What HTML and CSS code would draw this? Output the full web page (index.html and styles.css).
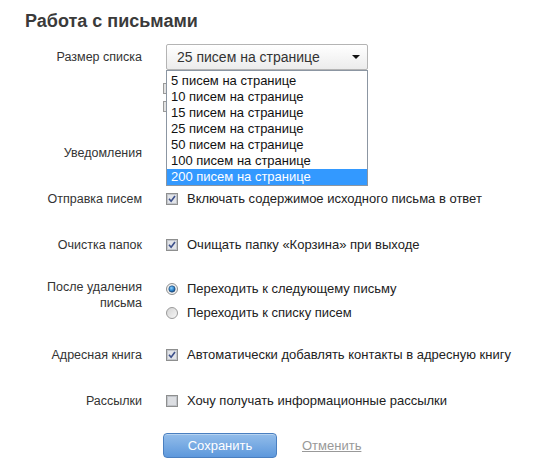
FILE: index.html
```html
<!DOCTYPE html>
<html lang="ru">
<head>
<meta charset="utf-8">
<title>Работа с письмами</title>
<link rel="stylesheet" href="styles.css">
</head>
<body>
<div class="page">
  <h1 class="title">Работа с письмами</h1>
  <div class="form">
    <div class="row row--first">
      <div class="label label--tall">Размер списка</div>
      <div class="content">
        <div class="select-wrap">
          <div class="select">
            <span class="select-value">25 писем на странице</span>
            <span class="select-arrow"></span>
          </div>
          <ul class="dropdown">
            <li class="dropdown-item">5 писем на странице</li>
            <li class="dropdown-item">10 писем на странице</li>
            <li class="dropdown-item">15 писем на странице</li>
            <li class="dropdown-item">25 писем на странице</li>
            <li class="dropdown-item">50 писем на странице</li>
            <li class="dropdown-item">100 писем на странице</li>
            <li class="dropdown-item dropdown-item--active">200 писем на странице</li>
          </ul>
        </div>
        <div class="hidden-opts">
          <div class="hidden-line"><span class="cb--peek"></span></div>
          <div class="hidden-line"><span class="cb--peek"></span></div>
        </div>
      </div>
    </div>

    <div class="row">
      <div class="label">Уведомления</div>
      <div class="content content--blank"></div>
    </div>

    <div class="row">
      <div class="label">Отправка писем</div>
      <div class="content">
        <div class="option">
          <svg class="cb" viewBox="0 0 12 12"><rect x="0.5" y="0.5" width="11" height="11" fill="#fff" stroke="#8e8f8f"/><rect x="1.5" y="1.5" width="9" height="9" fill="#e2e4e8" stroke="#c3c6cc"/><path d="M3 5.8 L5.1 8.3 L9 3" fill="none" stroke="#3b4f8a" stroke-width="1.6"/></svg>
          <span class="option-text">Включать содержимое исходного письма в ответ</span>
        </div>
      </div>
    </div>

    <div class="row">
      <div class="label">Очистка папок</div>
      <div class="content">
        <div class="option">
          <svg class="cb" viewBox="0 0 12 12"><rect x="0.5" y="0.5" width="11" height="11" fill="#fff" stroke="#8e8f8f"/><rect x="1.5" y="1.5" width="9" height="9" fill="#e2e4e8" stroke="#c3c6cc"/><path d="M3 5.8 L5.1 8.3 L9 3" fill="none" stroke="#3b4f8a" stroke-width="1.6"/></svg>
          <span class="option-text">Очищать папку «Корзина» при выходе</span>
        </div>
      </div>
    </div>

    <div class="row row--radio">
      <div class="label label--pad">После удаления<br>письма</div>
      <div class="content">
        <div class="option option--radio">
          <svg class="rb" viewBox="0 0 12 12"><defs><radialGradient id="rdot" cx="0.4" cy="0.35" r="0.7"><stop offset="0" stop-color="#8fd2ff"/><stop offset="0.6" stop-color="#2a7fc6"/><stop offset="1" stop-color="#0d3f78"/></radialGradient></defs><circle cx="6" cy="6" r="5.5" fill="#f1f1f1" stroke="#8e8f8f"/><circle cx="6" cy="6" r="3.2" fill="url(#rdot)" stroke="#24476f" stroke-width="0.6"/></svg>
          <span class="option-text">Переходить к следующему письму</span>
        </div>
        <div class="option option--radio">
          <svg class="rb" viewBox="0 0 12 12"><defs><linearGradient id="rbg" x1="0" y1="0" x2="1" y2="1"><stop offset="0" stop-color="#d2d2d2"/><stop offset="1" stop-color="#f8f8f8"/></linearGradient></defs><circle cx="6" cy="6" r="5.5" fill="url(#rbg)" stroke="#9a9a9a"/></svg>
          <span class="option-text">Переходить к списку писем</span>
        </div>
      </div>
    </div>

    <div class="row row--after-radio">
      <div class="label">Адресная книга</div>
      <div class="content">
        <div class="option">
          <svg class="cb" viewBox="0 0 12 12"><rect x="0.5" y="0.5" width="11" height="11" fill="#fff" stroke="#8e8f8f"/><rect x="1.5" y="1.5" width="9" height="9" fill="#e2e4e8" stroke="#c3c6cc"/><path d="M3 5.8 L5.1 8.3 L9 3" fill="none" stroke="#3b4f8a" stroke-width="1.6"/></svg>
          <span class="option-text">Автоматически добавлять контакты в адресную книгу</span>
        </div>
      </div>
    </div>

    <div class="row">
      <div class="label">Рассылки</div>
      <div class="content">
        <div class="option">
          <svg class="cb" viewBox="0 0 12 12"><rect x="0.5" y="0.5" width="11" height="11" fill="#fff" stroke="#8e8f8f"/><rect x="1.5" y="1.5" width="9" height="9" fill="#dcdee2" stroke="#c0c3c8"/></svg>
          <span class="option-text">Хочу получать информационные рассылки</span>
        </div>
      </div>
    </div>

    <div class="actions">
      <button class="btn" type="button">Сохранить</button>
      <a class="cancel" href="#">Отменить</a>
    </div>
  </div>
</div>
</body>
</html>
```

FILE: styles.css
```css
* { box-sizing: border-box; }

body {
  margin: 0;
  background: #fff;
  font-family: "Liberation Sans", Arial, sans-serif;
  font-size: 13px;
  color: #333;
}

.page {
  padding: 9px 0 0 25px;
}

.title {
  margin: 0;
  font-size: 18px;
  line-height: 24px;
  font-weight: bold;
  color: #3a3a3a;
}

.form {
  margin-top: 11px;
}

.row {
  display: flex;
  margin-top: 30px;
  line-height: 16px;
}

.row--first { margin-top: 0; }
.row--radio { margin-top: 24px; }
.row--after-radio { margin-top: 22px; }

.label {
  width: 117px;
  flex: none;
  margin-right: 24px;
  text-align: right;
  font-size: 12.5px;
  color: #333;
}

.label--tall { line-height: 26px; }
.label--pad { padding-top: 2px; }

.content {
  flex: 1;
}

.content--blank { height: 16px; }

.select-wrap {
  position: relative;
  width: 202px;
}

.select {
  height: 26px;
  border: 1px solid #b4b4b4;
  border-radius: 2px;
  background: linear-gradient(#ffffff, #ececec);
  display: flex;
  align-items: center;
  padding-left: 10px;
  font-size: 14px;
  color: #333;
}

.select-value { flex: 1; }

.select-arrow {
  width: 0;
  height: 0;
  margin-right: 7px;
  border-left: 4px solid transparent;
  border-right: 4px solid transparent;
  border-top: 4px solid #111;
}

.dropdown {
  position: absolute;
  top: 26px;
  left: 0;
  width: 202px;
  margin: 0;
  padding: 2px 0 0;
  list-style: none;
  background: #fff;
  border: 1px solid #8c96a2;
  z-index: 2;
}

.dropdown-item {
  height: 16px;
  line-height: 16px;
  padding-left: 4px;
  font-size: 13px;
  color: #111;
  white-space: nowrap;
}

.dropdown-item--active {
  background: #3399ff;
  color: #fff;
}

.hidden-opts {
  margin-top: 9px;
}

.hidden-line {
  height: 18px;
  display: flex;
  align-items: center;
}

.cb--peek {
  display: block;
  margin-left: -3px;
  width: 12px;
  height: 11px;
  border: 1px solid #9a9a9a;
  background: #e2e2e2;
}

.option {
  display: flex;
  align-items: center;
  height: 16px;
  color: #222;
}

.option--radio { height: 24px; }

.cb, .rb {
  width: 12px;
  height: 12px;
  flex: none;
  margin-right: 9px;
}

.option-text { white-space: nowrap; }

.actions {
  display: flex;
  align-items: center;
  margin-top: 24px;
  padding-left: 138px;
}

.btn {
  width: 114px;
  height: 25px;
  padding: 0;
  border: 1px solid #4a7fc0;
  border-radius: 4px;
  background: linear-gradient(#93bdea, #5d98dc);
  color: #fff;
  font-family: "Liberation Sans", Arial, sans-serif;
  font-size: 13px;
  box-shadow: inset 0 1px 0 rgba(255,255,255,0.35);
}

.cancel {
  margin-left: 25px;
  color: #999;
  font-size: 13px;
  text-decoration: underline;
}
```
